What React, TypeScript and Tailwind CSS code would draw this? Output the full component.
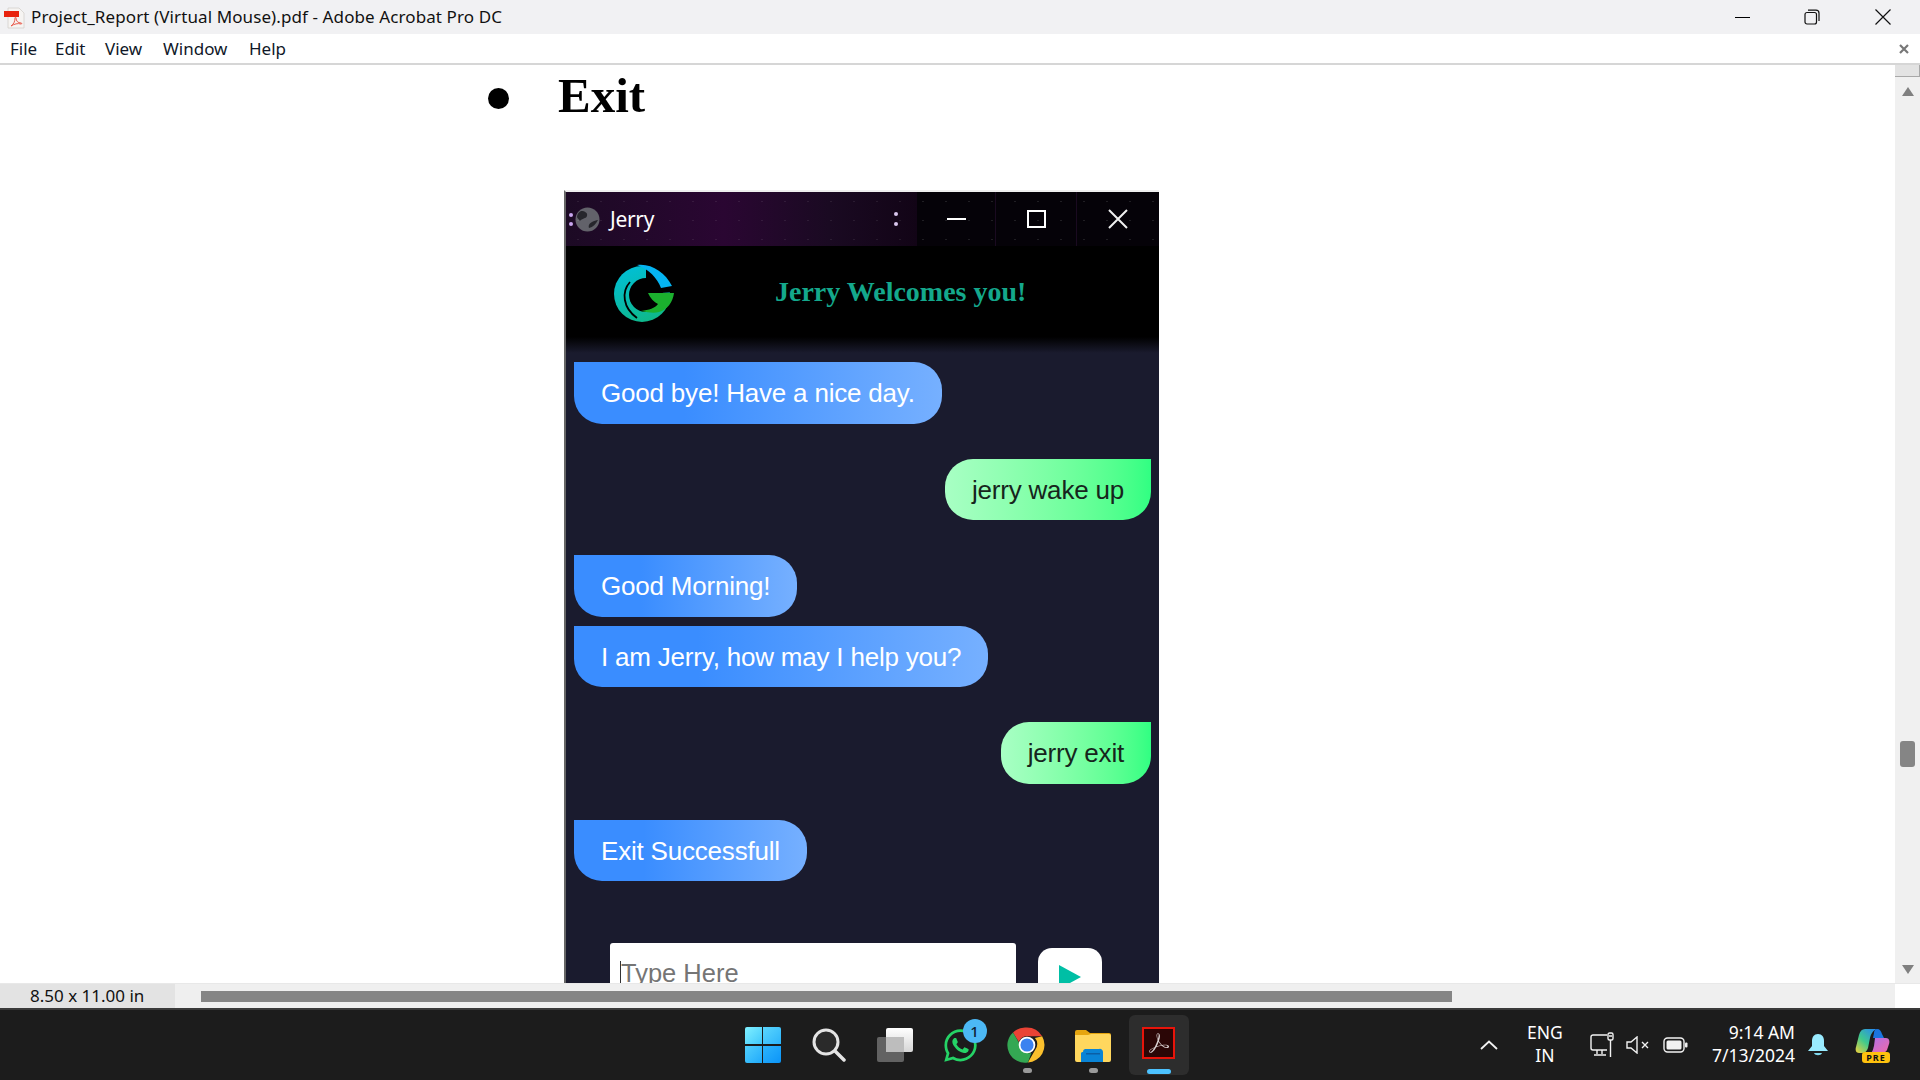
import React from "react";
import { FaWhatsapp } from "react-icons/fa";
import { SiAdobeacrobatreader } from "react-icons/si";

const UI_FONT = "font-['Noto_Sans','Open_Sans',sans-serif]";

const Bubble: React.FC<{ text: string; mine?: boolean; tall?: boolean; className?: string }> = ({
  text,
  mine = false,
  tall = false,
  className = ""
}) => (
  <div
    className={`flex items-center px-[27px] pt-[1px] text-[26px] tracking-[-0.2px] font-['Liberation_Sans',sans-serif] whitespace-nowrap ${
      tall ? "h-[62px]" : "h-[61px]"
    } ${
      mine
        ? "self-end rounded-[28px] rounded-tr-none bg-gradient-to-r from-[#a8ffc4] to-[#30ff82] text-[#16251c]"
        : "self-start rounded-[28px] rounded-tl-none bg-[linear-gradient(to_right,#3a8dff_30%,#76b0ff)] text-white"
    } ${className}`}
  >
    {text}
  </div>
);

const PdfIcon = () => (
  <svg width="24" height="24" viewBox="0 0 24 24" className="shrink-0">
    <path d="M6 3h11l5 5v15H6z" fill="#f6f4f2" stroke="#d4d0cc" strokeWidth="0.8" />
    <rect x="2" y="6" width="15" height="6" fill="#e8220e" />
    <path d="M9 21c3-2 4-5 4-8 0-1 1-1 1 0 0 3 2 5 5 5 1 0 1 1 0 1-3-1-7 0-10 2z" fill="none" stroke="#e8584a" strokeWidth="1" />
  </svg>
);

const JerryLogo = () => (
  <svg width="62" height="60" viewBox="0 0 62 60">
    <defs>
      <linearGradient id="ring" x1="0.2" y1="0" x2="0.6" y2="1">
        <stop offset="0" stopColor="#00bfd8" />
        <stop offset="1" stopColor="#0fb88a" />
      </linearGradient>
    </defs>
    <circle cx="29" cy="30" r="28" fill="url(#ring)" />
    <circle cx="33" cy="31" r="17" fill="#000" />
    <path d="M33 30L62 28V0H33z" fill="#000" />
    <path d="M24 1c14-2 28 7 35 21l-11 2C44 14 36 5 24 1z" fill="#05b4f2" />
    <path d="M17 18C8 28 10 44 24 54" fill="none" stroke="#000" strokeWidth="1.8" />
    <path d="M35 29h26c-1 9-7 17-15 19-4 1-9 1-18-1 8-1 14-3 17-7-4-2-8-6-10-11z" fill="#1bb02e" />
  </svg>
);

const ChromeIcon = () => (
  <svg width="42" height="42" viewBox="0 0 48 48">
    <path d="M24 4a20 20 0 0 1 17.3 10H24a10 10 0 0 0-9.4 6.5L8 9.6A20 20 0 0 1 24 4z" fill="#ea4335" />
    <path d="M41.3 14A20 20 0 0 1 25 44l8.6-15A10 10 0 0 0 33 16z" fill="#fbc02d" />
    <path d="M8 9.6l8.6 14.9A10 10 0 0 0 29 33l-4 11A20 20 0 0 1 8 9.6z" fill="#34a853" />
    <circle cx="24" cy="24" r="9.5" fill="#fff" />
    <circle cx="24" cy="24" r="7.5" fill="#3b82f0" />
  </svg>
);

const FolderIcon = () => (
  <svg width="36" height="33" viewBox="0 0 36 33">
    <path d="M0 3a2 2 0 0 1 2-2h9l4 3h19a2 2 0 0 1 2 2v4H0z" fill="#e5a50f" />
    <path d="M0 6h13l3-1h18a2 2 0 0 1 2 2v24a2 2 0 0 1-2 2H2a2 2 0 0 1-2-2z" fill="#ffd75e" />
    <path d="M6 33v-9a2 2 0 0 1 2-1 3 3 0 0 1 2-3h14a3 3 0 0 1 4 3v10z" fill="#0a84d6" />
    <rect x="11" y="24" width="14" height="1.5" fill="#0b5fa5" />
  </svg>
);

const TaskCell: React.FC<{ children: React.ReactNode; dot?: boolean }> = ({ children, dot = false }) => (
  <div className="relative w-[66px] h-full flex items-center justify-center">
    {children}
    {dot && <span className="absolute bottom-[7px] left-[29px] w-[9px] h-[5px] rounded-full bg-[#9a9a9a]" />}
  </div>
);

const Taskbar = () => (
  <div className={`h-[70px] shrink-0 flex bg-[#1c1c1c] text-white ${UI_FONT}`}>
    <div className="flex-1" />
    <div className="flex h-full ml-[1px]">
      <TaskCell>
        <div className="grid grid-cols-2 gap-[1.5px] w-[36px] h-[36px]">
          <span className="rounded-tl-[2px] bg-gradient-to-br from-[#7ff0ff] to-[#3ec8fb]" />
          <span className="rounded-tr-[2px] bg-gradient-to-br from-[#5ad6fd] to-[#2bb4fb]" />
          <span className="rounded-bl-[2px] bg-gradient-to-br from-[#4fcffc] to-[#1eaafb]" />
          <span className="rounded-br-[2px] bg-gradient-to-br from-[#2bb4fc] to-[#0a94f8]" />
        </div>
      </TaskCell>
      <TaskCell>
        <svg width="34" height="34" viewBox="0 0 34 34" fill="none" stroke="#e4e4e4" strokeLinecap="round">
          <circle cx="14" cy="14" r="12" strokeWidth="3" fill="#2a2a2a" />
          <path d="M23 23l9 9" strokeWidth="3.5" />
        </svg>
      </TaskCell>
      <TaskCell>
        <div className="relative w-[36px] h-[34px]">
          <span className="absolute right-0 top-0 w-[27px] h-[24px] rounded-[2px] bg-gradient-to-b from-[#ffffff] to-[#d6d6d6]" />
          <span className="absolute left-0 bottom-0 w-[27px] h-[25px] rounded-[2px] bg-[#6a6a6a]/90" />
          <span className="absolute left-[9px] top-[9px] w-[18px] h-[15px] bg-[#bdbdbd]" />
        </div>
      </TaskCell>
      <TaskCell>
        <FaWhatsapp className="text-[37px] text-[#25d366]" />
        <span className="absolute top-[9px] left-[35px] w-[24px] h-[24px] rounded-full bg-[#4cb8f5] text-[#102030] text-[15px] font-medium flex items-center justify-center">
          1
        </span>
      </TaskCell>
      <TaskCell dot>
        <ChromeIcon />
      </TaskCell>
      <TaskCell dot>
        <FolderIcon />
      </TaskCell>
      <TaskCell>
        <div className="relative w-[60px] h-[60px] rounded-[6px] bg-[#2d2d2d] flex items-center justify-center">
          <div className="w-[33px] h-[32px] -mt-[4px] bg-[#2b0606] border-[2px] border-[#e8140a] flex items-center justify-center">
            <SiAdobeacrobatreader className="text-[20px] text-[#d9d0d0]" />
          </div>
          <span className="absolute bottom-[1px] left-[18px] w-[24px] h-[5px] rounded-full bg-[#4cc2ff]" />
        </div>
      </TaskCell>
    </div>
    <div className="flex-1 flex items-center justify-end text-[17.5px] leading-[23px]">
      <svg width="18" height="10" viewBox="0 0 18 10" fill="none" stroke="#f2f2f2" strokeWidth="1.8" className="mr-[27px]">
        <path d="M1 9l8-7.5L17 9" />
      </svg>
      <div className="w-[40px] text-center mr-[25px] -mt-[2px]">
        <div>ENG</div>
        <div>IN</div>
      </div>
      <svg width="24" height="26" viewBox="0 0 24 26" fill="none" stroke="#f2f2f2" strokeWidth="1.4" className="mr-[12px]">
        <path d="M17 3H3a2 2 0 0 0-2 2v11a2 2 0 0 0 2 2h14M7 18v4M12 18v4M4 23h12" />
        <rect x="18" y="1" width="5" height="7" rx="1.5" />
        <path d="M20.5 8v17M19 4h3" />
      </svg>
      <svg width="24" height="18" viewBox="0 0 24 18" fill="none" stroke="#f2f2f2" strokeWidth="1.4" className="mr-[13px]">
        <path d="M1 6h4l6-5v16l-6-5H1z" />
        <path d="M16 6l6 6M22 6l-6 6" />
      </svg>
      <svg width="25" height="16" viewBox="0 0 25 16" className="mr-[24px]">
        <rect x="1" y="1" width="20" height="14" rx="3.5" fill="none" stroke="#f2f2f2" strokeWidth="1.4" />
        <rect x="3.5" y="3.5" width="15" height="9" rx="1.5" fill="#f2f2f2" />
        <rect x="22" y="5.5" width="2.5" height="5" rx="1" fill="#f2f2f2" />
      </svg>
      <div className="text-right mr-[13px] -mt-[2px] whitespace-nowrap">
        <div>9:14 AM</div>
        <div>7/13/2024</div>
      </div>
      <svg width="20" height="24" viewBox="0 0 20 24" className="mr-[27px]">
        <path d="M10 1c4 0 6 3 6 7v5l4 5H0l4-5V8c0-4 2-7 6-7z" fill="#99ebff" />
        <path d="M6 20h8c-1 3-7 3-8 0z" fill="#7fd8ee" />
      </svg>
      <div className="relative w-[36px] h-[36px] mr-[29px]">
        <svg width="36" height="28" viewBox="0 0 36 28">
          <defs>
            <linearGradient id="copA" x1="0" y1="1" x2="0.8" y2="0">
              <stop offset="0" stopColor="#f2d13a" />
              <stop offset="0.5" stopColor="#3fc98d" />
              <stop offset="1" stopColor="#2a8fe8" />
            </linearGradient>
            <linearGradient id="copB" x1="0" y1="0" x2="1" y2="1">
              <stop offset="0" stopColor="#b070e8" />
              <stop offset="1" stopColor="#f06aa8" />
            </linearGradient>
          </defs>
          <path d="M10 2h12c-4 1-6 5-7 9l-2 10c-1 3-3 5-6 5H4c-3 0-4-3-3-6l3-12c1-4 3-6 6-6z" fill="url(#copA)" />
          <path d="M22 2c3 0 4 2 5 5l2 4H18l1-5c0-2 1-4 3-4z" fill="#1a75e0" />
          <path d="M20 11h11c3 0 4 3 3 6l-2 6c-1 2-3 3-5 3H15c3-1 3-4 4-7z" fill="url(#copB)" />
        </svg>
        <span className="absolute bottom-0 left-[7px] w-[28px] h-[11px] rounded-[3px] bg-[#ffc20e] text-[#111] text-[9px] leading-[11px] font-bold text-center tracking-[1px]">
          PRE
        </span>
      </div>
    </div>
  </div>
);

const ChatWindow = () => (
  <div className="w-[595px] ml-[564px] mt-[63px] shrink-0 border-t-2 border-t-[#efefef] border-l-2 border-l-[#666666] bg-[#1a1b2e]">
    <div className="relative h-[54px] flex bg-[#050208] text-white font-['Noto_Sans',sans-serif]">
      <span className="absolute inset-0 bg-[radial-gradient(#ffffff1c_1px,transparent_1px)] bg-[length:23px_19px]" />
      <div className="relative w-[351px] flex items-center bg-[linear-gradient(to_right,#1c0a24,#2a0632_45%,#1a0a22_75%,#120416)]">
        <span className="absolute inset-0 bg-[radial-gradient(#ffffff14_1px,transparent_1px)] bg-[length:23px_19px]" />
        <div className="flex flex-col gap-[5px] ml-[3px] w-[5px]">
          <span className="w-[4px] h-[4px] rounded-full bg-[#c9a6ef]" />
          <span className="w-[4px] h-[4px] rounded-full bg-[#c9a6ef]" />
        </div>
        <svg width="25" height="25" viewBox="0 0 25 25" className="ml-[1px]">
          <circle cx="12.5" cy="12.5" r="12" fill="#62626a" />
          <path d="M6 4c4 0 7 2 6 5s-5 2-7 5c-1-2-3-3-3-4 0-3 2-5 4-6zM23 13c-2 4-5 7-9 8-1-3 1-5 3-6s4-2 6-2z" fill="#26262c" />
        </svg>
        <span className="ml-[10px] pt-[1px] text-[21px] tracking-[-0.3px]">Jerry</span>
        <div className="ml-auto mr-[19px] flex flex-col gap-[6px]">
          <span className="w-[4px] h-[4px] rounded-full bg-[#d8c6ee]" />
          <span className="w-[4px] h-[4px] rounded-full bg-[#d8c6ee]" />
        </div>
      </div>
      <div className="relative flex-1 flex">
        <div className="w-[79px] flex items-center justify-center border-r border-[#1a0a20]">
          <span className="w-[19px] h-[2px] bg-white" />
        </div>
        <div className="w-[81px] flex items-center justify-center border-r border-[#1a0a20]">
          <span className="w-[19px] h-[18px] border-[2px] border-white" />
        </div>
        <div className="flex-1 flex items-center justify-center">
          <svg width="20" height="20" viewBox="0 0 20 20" stroke="#f0f0f0" strokeWidth="2">
            <path d="M1 1l18 18M19 1L1 19" />
          </svg>
        </div>
      </div>
    </div>
    <div className="h-[107px] bg-[linear-gradient(to_bottom,#000_85%,#1a1b2e)] flex items-start">
      <div className="ml-[47px] mt-[18px]">
        <JerryLogo />
      </div>
      <div className="ml-[100px] mt-[28px] text-[28px] leading-[36px] font-bold font-['Liberation_Serif',serif] text-[#14a88c] whitespace-nowrap">
        Jerry Welcomes you!
      </div>
    </div>
    <div className="flex flex-col px-[8px] pt-[9px]">
      <Bubble tall text="Good bye! Have a nice day." />
      <Bubble mine text="jerry wake up" className="mt-[35px]" />
      <Bubble tall text="Good Morning!" className="mt-[35px]" />
      <Bubble text="I am Jerry, how may I help you?" className="mt-[9px]" />
      <Bubble tall mine text="jerry exit" className="mt-[35px]" />
      <Bubble text="Exit Successfull" className="mt-[36px]" />
    </div>
    <div className="flex items-start pl-[44px] mt-[62px] pb-[20px]">
      <div className="relative w-[406px] h-[60px] bg-white rounded-[3px] flex items-center pl-[11px] text-[25.5px] text-[#757575] font-['Liberation_Sans',sans-serif]">
        <span className="absolute left-[10px] top-[18px] w-[1px] h-[28px] bg-[#333]" />
        Type Here
      </div>
      <div className="w-[64px] h-[52px] mt-[5px] ml-[22px] bg-white rounded-[14px] flex items-start justify-center pt-[17px]">
        <svg width="22" height="24" viewBox="0 0 22 24">
          <path d="M0 0l22 12L0 24z" fill="#00bfa5" />
        </svg>
      </div>
    </div>
  </div>
);

export default function App() {
  return (
    <div className={`h-screen w-[1920px] flex flex-col overflow-hidden bg-white text-[#111] ${UI_FONT}`}>
      {/* title bar */}
      <div className="h-[34px] shrink-0 flex items-center bg-[#f1f1f3]">
        <div className="ml-[2px]">
          <PdfIcon />
        </div>
        <span className="ml-[5px] text-[17px] tracking-[0.1px] whitespace-nowrap">Project_Report (Virtual Mouse).pdf - Adobe Acrobat Pro DC</span>
        <div className="ml-auto flex items-center">
          <span className="w-[15px] h-[1px] bg-black mr-[54px]" />
          <svg width="16" height="16" viewBox="0 0 16 16" fill="none" stroke="#111" strokeWidth="1.2" className="mr-[55px]">
            <rect x="1" y="3.5" width="11.5" height="11.5" rx="2" />
            <path d="M4 1.2h8a3 3 0 0 1 3 3V12" />
          </svg>
          <svg width="16" height="16" viewBox="0 0 16 16" stroke="#111" strokeWidth="1.2" className="mr-[29px]">
            <path d="M.5.5l15 15M15.5.5l-15 15" />
          </svg>
        </div>
      </div>
      {/* menu */}
      <div className="h-[31px] shrink-0 flex items-center border-b-2 border-[#d6d6d6] text-[17px] pl-[10px] text-[#101828]">
        <span className="w-[45px]">File</span>
        <span className="w-[50px]">Edit</span>
        <span className="w-[58px]">View</span>
        <span className="w-[86px]">Window</span>
        <span>Help</span>
        <svg width="10" height="10" viewBox="0 0 10 10" stroke="#777" strokeWidth="2.2" className="ml-auto mr-[11px]">
          <path d="M1 1l8 8M9 1L1 9" />
        </svg>
      </div>
      {/* document and scrollbar */}
      <div className="flex-1 min-h-0 flex">
        <div className="flex-1 min-w-0 overflow-hidden">
          <div className="h-[62px] flex items-center pl-[488px]">
            <span className="w-[21px] h-[21px] mt-[4px] rounded-full bg-black" />
            <span className="ml-[49px] -mt-[1px] text-[49px] leading-none font-bold text-black font-['Liberation_Serif',serif]">Exit</span>
          </div>
          <ChatWindow />
        </div>
        <div className="relative w-[25px] shrink-0 flex flex-col items-center bg-[#f0f0f0]">
          <span className="w-full h-[12px] bg-[#e3e3e3] border-r border-b border-[#a8a8a8]" />
          <svg width="12" height="9" viewBox="0 0 12 9" className="mt-[10px]">
            <path d="M6 0l6 9H0z" fill="#808080" />
          </svg>
          <span className="absolute top-[676px] left-[5px] w-[15px] h-[26px] rounded-[3px] bg-[#858585]" />
          <svg width="12" height="9" viewBox="0 0 12 9" className="mt-auto mb-[9px]">
            <path d="M0 0h12L6 9z" fill="#808080" />
          </svg>
        </div>
      </div>
      {/* status bar */}
      <div className="h-[25px] shrink-0 flex text-[17px] border-t border-[#e8e8e8]">
        <div className="w-[175px] bg-[#e3e3e3] pl-[30px] flex items-center whitespace-nowrap">8.50 x 11.00 in</div>
        <div className="w-[1720px] bg-[#efefef] flex items-center pl-[26px]">
          <span className="w-[1251px] h-[11px] bg-[#858585]" />
        </div>
        <div className="flex-1 bg-white" />
      </div>
      <div className="h-[2px] shrink-0 bg-[#3a3a3a]" />
      <Taskbar />
    </div>
  );
}
